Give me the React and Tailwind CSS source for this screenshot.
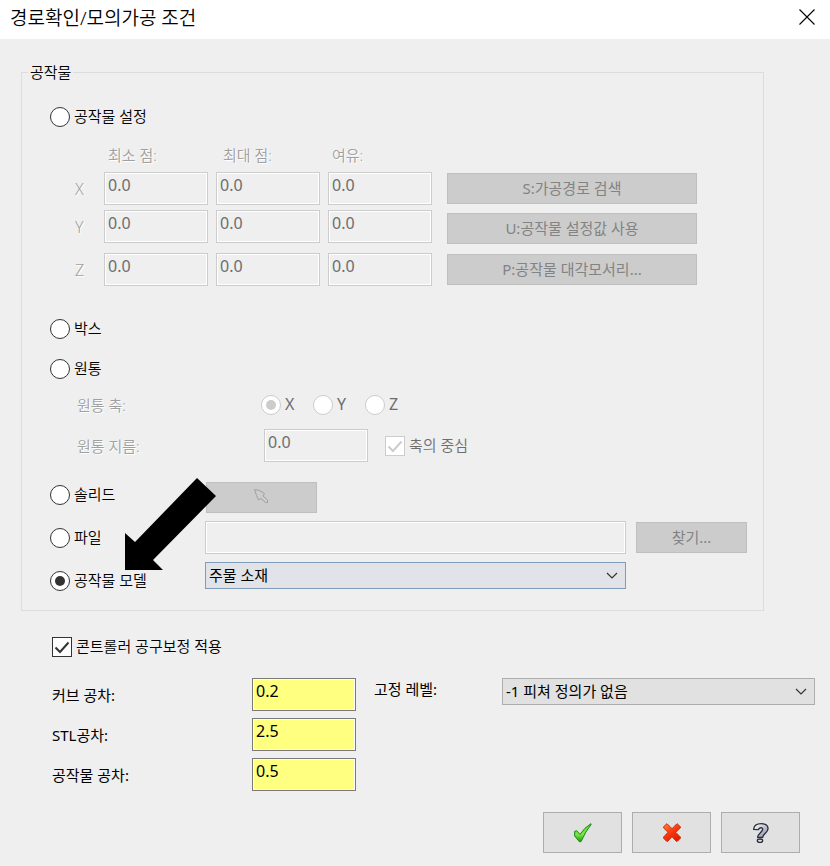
import { useState } from "react";
import clsx from "clsx";

const AXES = ["X", "Y", "Z"];

const embossed = "text-[#a0a0a0] [text-shadow:1px_1px_0_#fff]";

function Radio({ label, className, ...props }) {
  return (
    <label
      className={clsx(
        "flex h-5 w-fit items-center gap-1 whitespace-nowrap has-disabled:text-[#6d6d6d]",
        className,
      )}
    >
      <input
        type="radio"
        className="grid size-5 shrink-0 appearance-none place-content-center rounded-full border border-[#333] bg-white before:size-[10px] before:rounded-full checked:before:bg-[#333] disabled:border-[#ccc] disabled:checked:before:bg-[#ccc]"
        {...props}
      />
      <span className="pb-[2px]">{label}</span>
    </label>
  );
}

function CheckBox({ label, ...props }) {
  return (
    <label className="flex h-5 w-fit items-center gap-1 whitespace-nowrap has-disabled:text-[#6d6d6d]">
      <span className="relative size-5 shrink-0">
        <input
          type="checkbox"
          className="peer block size-5 appearance-none border border-[#333] bg-white disabled:border-[#ccc]"
          {...props}
        />
        <svg
          viewBox="0 0 20 20"
          className="pointer-events-none absolute inset-0 hidden size-5 fill-none stroke-[#333] stroke-2 peer-checked:block peer-disabled:stroke-[#ccc]"
        >
          <path d="M3.5 10.5 8 15 16.5 5.5" />
        </svg>
      </span>
      <span className="pb-[2px]">{label}</span>
    </label>
  );
}

function TextBox({ className, ...props }) {
  return (
    <input
      type="text"
      className={clsx(
        "block h-[33px] border px-[3px] pb-2 text-base leading-6 font-normal shadow-[inset_0_0_0_1px_#fff] outline-none disabled:border-[#ccc] disabled:bg-[#efefef] disabled:text-[#6d6d6d]",
        className,
      )}
      {...props}
    />
  );
}

function ComboBox({ className, selectClass, options, ...props }) {
  return (
    <div className={clsx("relative", className)}>
      <select
        className={clsx(
          "block h-[27px] w-full appearance-none border pr-8 pb-[2px] pl-[3px] font-normal text-black outline-none",
          selectClass,
        )}
        {...props}
      >
        {options.map((o) => (
          <option key={o}>{o}</option>
        ))}
      </select>
      <svg
        viewBox="0 0 12 8"
        className="pointer-events-none absolute top-[10px] right-2 h-2 w-3 fill-none stroke-[#333]"
      >
        <path d="M1 1 6 6 11 1" strokeWidth="1.2" />
      </svg>
    </div>
  );
}

function GreyButton({ className, children, ...props }) {
  return (
    <button
      type="button"
      disabled
      className={clsx(
        "flex h-[31px] items-center justify-center border border-[#bfbfbf] bg-[#ccc] pb-[2px] font-normal text-[#838383]",
        className,
      )}
      {...props}
    >
      {children}
    </button>
  );
}

function PickIcon() {
  return (
    <svg viewBox="0 0 15 15" className="size-[15px] fill-none stroke-[#a0a0a0]">
      <path d="M.5.5 5.5 1.5 10.5 4.5 9 7 13.5 11 13.5 13.5 11.5 13.5 7 9.5 4.5 11 2.5 6.5Z" />
    </svg>
  );
}

function OkIcon() {
  return (
    <svg viewBox="0 0 54 60" className="h-5 w-[18px]">
      <defs>
        <linearGradient id="ok" x1="0" y1="0" x2="0" y2="1">
          <stop offset="0" stopColor="#5fe03a" />
          <stop offset=".6" stopColor="#7ee345" />
          <stop offset="1" stopColor="#1f9a10" />
        </linearGradient>
      </defs>
      <path
        d="M2 25 8 23 18 34 Q31 14 51 2 L51 5 Q35 24 21 56 L16 56 2 39Z"
        fill="url(#ok)"
        stroke="#128a12"
        strokeWidth="3"
      />
    </svg>
  );
}

function CancelIcon() {
  return (
    <svg viewBox="0 0 54 57" className="h-[19px] w-[18px]">
      <defs>
        <linearGradient id="cancel" x1="0" y1="0" x2=".6" y2="1">
          <stop offset="0" stopColor="#ff8a38" />
          <stop offset=".5" stopColor="#fa3c12" />
          <stop offset="1" stopColor="#e31c00" />
        </linearGradient>
      </defs>
      <path
        d="M12 2 27 17 42 2 52 11 52 15 38 28 52 42 52 46 43 55 40 55 27 41 14 55 11 55 2 46 2 42 15 28 2 15 2 11Z"
        fill="url(#cancel)"
        stroke="#cf2a08"
        strokeWidth="3"
      />
    </svg>
  );
}

function HelpIcon() {
  return (
    <svg viewBox="0 0 48 60" className="h-5 w-4 fill-none">
      <defs>
        <linearGradient id="help" x1="0" y1="0" x2="1" y2="1">
          <stop offset="0" stopColor="#fff" />
          <stop offset="1" stopColor="#8588a6" />
        </linearGradient>
      </defs>
      <path
        d="M2 19C3 6 14 2 25 2 38 2 46 8 45 18 44 30 30 33 29 43L14 43C13 33 28 28 29 19 29 12 19 13 16 20Z"
        fill="url(#help)"
        stroke="#2b2d3a"
        strokeWidth="4"
      />
      <ellipse cx="21" cy="53" rx="8" ry="5" fill="#e4e5ee" stroke="#2b2d3a" strokeWidth="4" />
    </svg>
  );
}

const footerButton =
  "flex h-[41px] w-[79px] items-center justify-center border border-[#adadad] bg-[#e1e1e1]";

export default function App() {
  const [stock, setStock] = useState("model");
  const [comp, setComp] = useState(true);

  const stockRadio = (value) => ({
    name: "stock",
    value,
    checked: stock === value,
    onChange: () => setStock(value),
  });

  return (
    <div className="min-h-screen bg-[#efefef] pb-[13px] font-['Noto_Sans','Noto_Sans_CJK_KR',sans-serif] text-[15px] leading-5 font-[350] text-black">
      <header className="flex h-[39px] items-center justify-between bg-white pr-[15px] pl-[10px]">
        <h1 className="pb-1 text-[19px] leading-7 font-[350]">경로확인/모의가공 조건</h1>
        <button type="button" aria-label="닫기" className="pb-[5px]">
          <svg viewBox="0 0 16 16" className="block size-4 stroke-black">
            <path d="M.5.5 15.5 15.5M15.5.5.5 15.5" strokeWidth="1.1" />
          </svg>
        </button>
      </header>

      <main className="pt-[23px]">
        <fieldset className="mr-[66px] ml-[21px] border border-[#dcdcdc] pb-[19px] pl-7">
          <legend className="-ml-[22px] px-[2px]">공작물</legend>

          <Radio label="공작물 설정" className="mt-[25px]" {...stockRadio("setup")} />

          <div className="mt-[18px] flex items-end pr-[66px] pl-[25px]">
            <div>
              <div className={clsx("flex h-[27px] gap-2 pl-[29px]", embossed)}>
                <span className="w-[104px] pl-1">최소 점:</span>
                <span className="w-[104px] pl-[7px]">최대 점:</span>
                <span className="w-[104px] pl-1">여유:</span>
              </div>
              {AXES.map((axis) => (
                <div
                  key={axis}
                  className="mb-[5px] flex items-center gap-2 last:mt-[10px] last:mb-0"
                >
                  <span className={clsx("w-[21px] text-base", embossed)}>{axis}</span>
                  {["최소", "최대", "여유"].map((col) => (
                    <TextBox
                      key={col}
                      disabled
                      defaultValue="0.0"
                      aria-label={`${axis} ${col}`}
                      className="w-[104px]"
                    />
                  ))}
                </div>
              ))}
            </div>
            <div className="ml-[15px] flex flex-1 flex-col gap-[9px] pb-px">
              <GreyButton>S:가공경로 검색</GreyButton>
              <GreyButton>U:공작물 설정값 사용</GreyButton>
              <GreyButton className="mt-px">P:공작물 대각모서리...</GreyButton>
            </div>
          </div>

          <Radio label="박스" className="mt-[33px]" {...stockRadio("box")} />
          <Radio label="원통" className="mt-5" {...stockRadio("cylinder")} />

          <div className="mt-4 flex items-center pl-[27px]">
            <span className={clsx("w-[184px]", embossed)}>원통 축:</span>
            <div className="flex text-base leading-5 font-normal">
              {AXES.map((axis) => (
                <Radio
                  key={axis}
                  label={axis}
                  name="axis"
                  disabled
                  defaultChecked={axis === "X"}
                  className="min-w-[52px]"
                />
              ))}
            </div>
          </div>

          <div className="mt-[14px] flex items-center pl-[27px]">
            <label htmlFor="diameter" className={clsx("w-[187px]", embossed)}>
              원통 지름:
            </label>
            <TextBox id="diameter" disabled defaultValue="0.0" className="mr-[17px] w-[104px]" />
            <CheckBox label="축의 중심" disabled defaultChecked />
          </div>

          <div className="relative mt-5 flex flex-col gap-2 pr-4">
            <div className="flex items-start">
              <Radio label="솔리드" className="mt-[3px] min-w-[156px]" {...stockRadio("solid")} />
              <GreyButton className="w-[111px]" aria-label="솔리드 선택">
                <PickIcon />
              </GreyButton>
            </div>
            <div className="flex items-center">
              <Radio label="파일" className="min-w-[155px]" {...stockRadio("file")} />
              <TextBox disabled aria-label="파일 경로" className="mr-[10px] min-w-0 flex-1" />
              <GreyButton className="w-[111px]">찾기...</GreyButton>
            </div>
            <div className="flex items-start pr-[121px]">
              <Radio label="공작물 모델" className="mt-[9px] min-w-[155px]" {...stockRadio("model")} />
              <ComboBox
                aria-label="공작물 모델"
                options={["주물 소재"]}
                className="flex-1"
                selectClass="border-[#7f9db9] bg-[#e1e3e8]"
              />
            </div>
            <svg
              viewBox="0 0 92 92"
              className="pointer-events-none absolute -top-1 left-[75px] size-[92px]"
            >
              <path d="M72 0 91 18 28 82 38 92 0 92 0 55 10 64Z" />
            </svg>
          </div>
        </fieldset>

        <div className="mt-[26px] pl-[52px]">
          <CheckBox
            label="콘트롤러 공구보정 적용"
            checked={comp}
            onChange={(e) => setComp(e.target.checked)}
          />
          <div className="mt-[21px] flex items-start pr-[15px] font-normal">
            <div className="flex flex-col gap-[7px]">
              {[
                ["curve", "커브 공차:", "0.2"],
                ["stl", "STL공차:", "2.5"],
                ["stock-tol", "공작물 공차:", "0.5"],
              ].map(([id, label, value]) => (
                <div key={id} className="flex items-center">
                  <label htmlFor={id} className="w-[200px]">
                    {label}
                  </label>
                  <TextBox
                    id={id}
                    defaultValue={value}
                    className="w-[104px] border-[#7a7a7a] bg-[#ffff80]"
                  />
                </div>
              ))}
            </div>
            <div className="ml-[18px] flex flex-1 items-start">
              <label htmlFor="level" className="w-32 pt-px">
                고정 레벨:
              </label>
              <ComboBox
                id="level"
                options={["-1 피쳐 정의가 없음"]}
                className="flex-1"
                selectClass="border-[#adadad] bg-[#e1e1e1]"
              />
            </div>
          </div>
        </div>

        <footer className="mt-[21px] flex justify-end gap-[10px] pr-[30px]">
          <button type="button" aria-label="확인" className={footerButton}>
            <OkIcon />
          </button>
          <button type="button" aria-label="취소" className={footerButton}>
            <CancelIcon />
          </button>
          <button type="button" aria-label="도움말" className={footerButton}>
            <HelpIcon />
          </button>
        </footer>
      </main>
    </div>
  );
}
